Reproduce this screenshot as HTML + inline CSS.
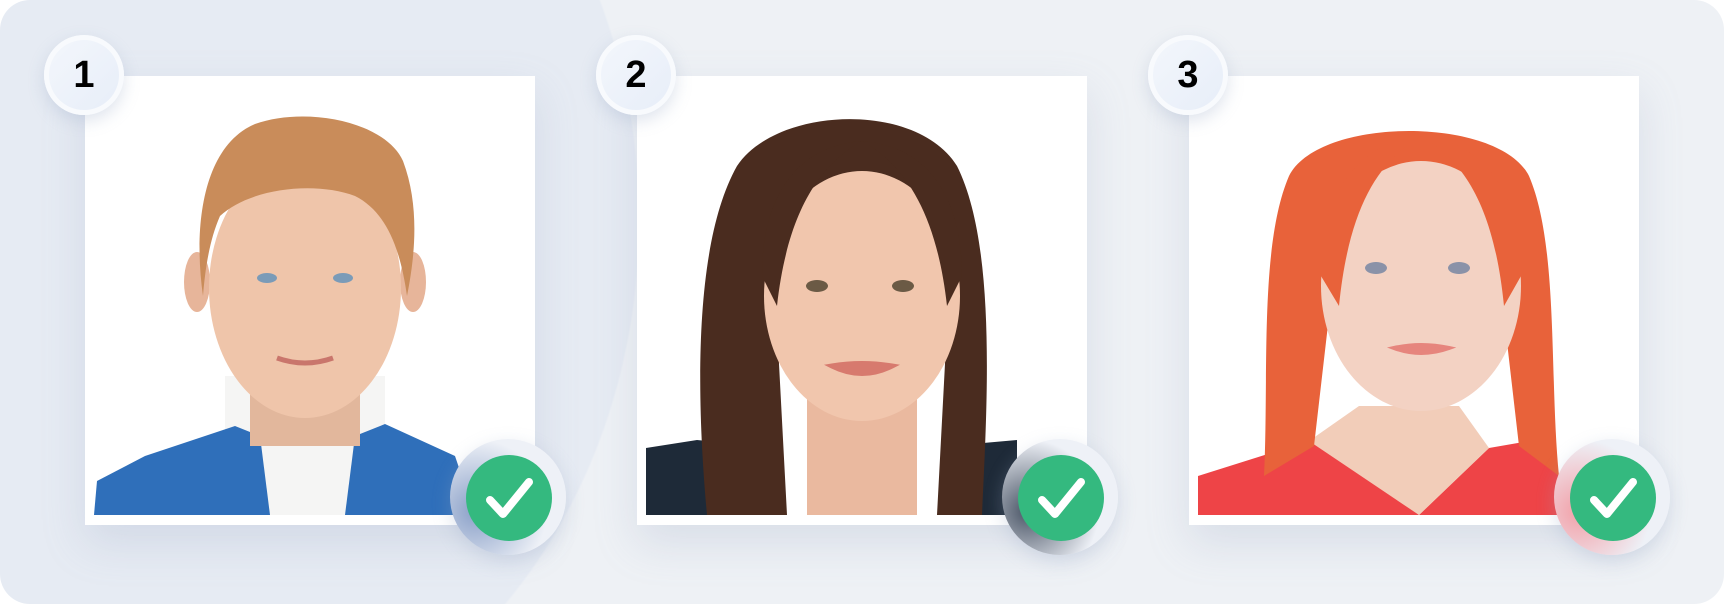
<!DOCTYPE html>
<html><head><meta charset="utf-8"><style>
html,body{margin:0;padding:0;width:1724px;height:604px;overflow:hidden;background:#fff}
.wrap{position:absolute;left:0;top:0;width:1724px;height:604px;border-radius:30px;overflow:hidden;background:radial-gradient(ellipse 470px 550px at 170px 220px,#e6ebf3 99.6%,#eef1f5 100%)}
.card{position:absolute;top:76px;width:450px;height:449px;background:#fff;box-shadow:0 18px 40px rgba(140,155,185,.22)}
.card svg{position:absolute;left:0;top:0}
.num{position:absolute;width:80px;height:80px;border-radius:50%;background:linear-gradient(135deg,#f4f7fc,#e6edf8);box-shadow:0 6px 16px rgba(150,165,195,.3),inset 0 0 0 5px #f8fafd;font:bold 38px "Liberation Sans",sans-serif;color:#000;text-align:center;line-height:80px}
.chk{position:absolute;width:116px;height:116px;border-radius:50%;background:#eef1f7;box-shadow:0 6px 18px rgba(150,165,195,.3)}
.chk .g{position:absolute;left:16px;top:16px;width:86px;height:86px;border-radius:50%;background:#34b97f}
.chk svg{position:absolute;left:16px;top:16px}
</style></head><body>
<div class="wrap">

<div class="card" style="left:85px">
<svg width="450" height="449" viewBox="0 0 450 449">
<rect x="140" y="300" width="160" height="139" fill="#f5f5f4"/>
<path d="M9 439 L12 405 L60 380 L150 350 L175 360 L185 439Z" fill="#2f6fba"/>
<path d="M260 439 L270 360 L300 348 L370 380 L390 439Z" fill="#2f6fba"/>
<rect x="165" y="300" width="110" height="70" fill="#e2b79c"/>
<ellipse cx="112" cy="206" rx="13" ry="30" fill="#e7b59a"/>
<ellipse cx="328" cy="206" rx="13" ry="30" fill="#e7b59a"/>
<ellipse cx="220" cy="212" rx="96" ry="130" fill="#efc5aa"/>
<path d="M118 220 C108 150 118 70 170 48 C220 30 300 45 318 85 C335 130 330 180 322 220 C315 170 300 135 270 120 C230 105 165 112 135 140 C124 165 120 195 118 220Z" fill="#c98c5a"/>
<ellipse cx="182" cy="202" rx="10" ry="5" fill="#7a9bb8"/>
<ellipse cx="258" cy="202" rx="10" ry="5" fill="#7a9bb8"/>
<path d="M192 282 Q220 292 248 282" stroke="#c9766c" stroke-width="5" fill="none"/>
</svg>
</div>

<div class="card" style="left:637px">
<svg width="450" height="449" viewBox="0 0 450 449">
<path d="M9 439 L9 372 L60 364 L120 370 L120 439Z" fill="#1e2a38"/>
<path d="M330 439 L335 368 L380 364 L380 439Z" fill="#1e2a38"/>
<rect x="170" y="290" width="110" height="149" fill="#eab99f"/>
<path d="M70 439 C60 330 55 170 100 90 C140 30 280 25 320 90 C360 170 350 330 345 439 L300 439 L310 250 L140 250 L150 439Z" fill="#4a2c1f"/>
<ellipse cx="225" cy="220" rx="98" ry="125" fill="#f1c6ad"/>
<path d="M125 200 C125 120 160 70 225 65 C180 90 150 140 140 230Z M325 200 C325 120 290 70 225 65 C270 90 300 140 310 230Z" fill="#4a2c1f"/>
<ellipse cx="180" cy="210" rx="11" ry="6" fill="#6b5a45"/>
<ellipse cx="266" cy="210" rx="11" ry="6" fill="#6b5a45"/>
<path d="M195 290 Q225 305 255 290 Q225 285 195 290Z" fill="#d77a6e" stroke="#d77a6e" stroke-width="5"/>
</svg>
</div>

<div class="card" style="left:1189px">
<svg width="450" height="449" viewBox="0 0 450 449">
<path d="M9 439 L9 400 L120 365 L160 370 L230 439Z" fill="#ee4447"/>
<path d="M230 439 L300 372 L340 365 L370 400 L375 439Z" fill="#ee4447"/>
<path d="M120 365 L230 439 L300 372 L270 330 L170 330Z" fill="#f2cdb9"/>
<path d="M75 400 C80 300 70 170 100 100 C130 40 310 40 340 100 C370 170 360 300 370 400 L330 370 L315 240 L140 240 L125 370Z" fill="#e8623a"/>
<ellipse cx="232" cy="210" rx="100" ry="125" fill="#f3d2c3"/>
<path d="M132 200 C130 120 170 65 232 60 C190 85 160 130 150 230Z M332 200 C334 120 295 65 232 60 C275 85 305 130 315 230Z" fill="#e8623a"/>
<ellipse cx="187" cy="192" rx="11" ry="6" fill="#8a92a8"/>
<ellipse cx="270" cy="192" rx="11" ry="6" fill="#8a92a8"/>
<path d="M205 272 Q232 282 260 272 Q232 266 205 272Z" fill="#e6857d" stroke="#e6857d" stroke-width="4"/>
</svg>
</div>

<div class="num" style="left:44px;top:35px">1</div>
<div class="num" style="left:596px;top:35px">2</div>
<div class="num" style="left:1148px;top:35px">3</div>

<div class="chk" style="left:450px;top:439px;background:radial-gradient(circle at 22% 62%,#8aa0c8,#eef1f7 62%)"><div class="g"></div><svg width="86" height="86" viewBox="0 0 86 86"><path d="M24 45 L37 59 L63 27" fill="none" stroke="#fff" stroke-width="8" stroke-linecap="round" stroke-linejoin="round"/></svg></div>
<div class="chk" style="left:1002px;top:439px;background:radial-gradient(circle at 22% 62%,#4a5566,#eef1f7 62%)"><div class="g"></div><svg width="86" height="86" viewBox="0 0 86 86"><path d="M24 45 L37 59 L63 27" fill="none" stroke="#fff" stroke-width="8" stroke-linecap="round" stroke-linejoin="round"/></svg></div>
<div class="chk" style="left:1554px;top:439px;background:radial-gradient(circle at 22% 62%,#f2a0a8,#eef1f7 62%)"><div class="g"></div><svg width="86" height="86" viewBox="0 0 86 86"><path d="M24 45 L37 59 L63 27" fill="none" stroke="#fff" stroke-width="8" stroke-linecap="round" stroke-linejoin="round"/></svg></div>
</div>
</body></html>
